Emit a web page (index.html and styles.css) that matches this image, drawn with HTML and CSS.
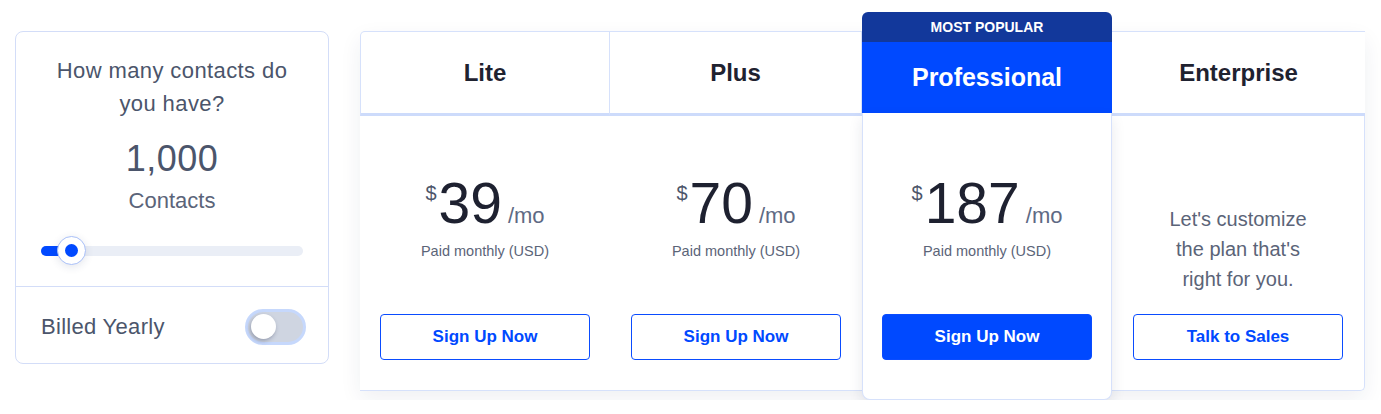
FILE: index.html
```html
<!DOCTYPE html>
<html lang="en">
<head>
    <meta charset="UTF-8">
    <meta name="viewport" content="width=device-width, initial-scale=1.0">
    <title>Pricing</title>
    <link rel="stylesheet" href="styles.css">
</head>
<body>

    <div class="page">
        <aside class="calc">
            <div class="calc-top">
                <h3 class="calc-title">How many contacts do<br>you have?</h3>
                <div class="calc-count">1,000</div>
                <div class="calc-unit">Contacts</div>
                <div class="slider">
                    <div class="slider-fill"></div>
                    <span class="slider-thumb"></span>
                </div>
            </div>
            <div class="calc-bottom">
                <span>Billed Yearly</span>
                <span class="toggle"><span class="toggle-knob"></span></span>
            </div>
        </aside>

        <section class="plans">
            <div class="plan plan-lite">
                <div class="plan-head"><h2>Lite</h2></div>
                <div class="plan-body">
                    <div class="price"><span class="cur">$</span><span class="amount">39</span><span class="per">/mo</span></div>
                    <p class="billing">Paid monthly (USD)</p>
                    <a href="#" class="btn">Sign Up Now</a>
                </div>
            </div>

            <div class="plan">
                <div class="plan-head"><h2>Plus</h2></div>
                <div class="plan-body">
                    <div class="price"><span class="cur">$</span><span class="amount">70</span><span class="per">/mo</span></div>
                    <p class="billing">Paid monthly (USD)</p>
                    <a href="#" class="btn">Sign Up Now</a>
                </div>
            </div>

            <div class="plan featured">
                <div class="badge">MOST POPULAR</div>
                <div class="plan-head"><h2>Professional</h2></div>
                <div class="plan-body">
                    <div class="price"><span class="cur">$</span><span class="amount">187</span><span class="per">/mo</span></div>
                    <p class="billing">Paid monthly (USD)</p>
                    <a href="#" class="btn btn-solid">Sign Up Now</a>
                </div>
            </div>

            <div class="plan plan-ent">
                <div class="plan-head"><h2>Enterprise</h2></div>
                <div class="plan-body">
                    <p class="note">Let's customize<br>the plan that's<br>right for you.</p>
                    <a href="#" class="btn">Talk to Sales</a>
                </div>
            </div>
        </section>
    </div>

</body>
</html>
```

FILE: styles.css
```css
* {
    box-sizing: border-box;
}
body {
    margin: 0;
    font-family: "Liberation Sans", Arial, sans-serif;
    background-color: #ffffff;
    color: #1f2230;
}
.page {
    display: flex;
    align-items: flex-start;
    gap: 31px;
    padding: 31px 0 0 15px;
}

/* contacts calculator */
.calc {
    width: 314px;
    height: 333px;
    border: 1px solid #d3ddf8;
    border-radius: 8px;
    display: flex;
    flex-direction: column;
}
.calc-top {
    padding: 22px 25px 30px;
    text-align: center;
    border-bottom: 1px solid #d3ddf8;
}
.calc-title {
    margin: 0;
    font-size: 22px;
    font-weight: normal;
    line-height: 33px;
    letter-spacing: 0.4px;
    color: #4b556b;
}
.calc-count {
    margin-top: 17px;
    font-size: 36px;
    line-height: 44px;
    letter-spacing: 0.5px;
    color: #4b556b;
}
.calc-unit {
    margin-top: 6px;
    font-size: 22px;
    line-height: 28px;
    color: #5b6479;
}
.slider {
    position: relative;
    margin-top: 31px;
    height: 10px;
    border-radius: 5px;
    background: #eaeef6;
}
.slider-fill {
    width: 30px;
    height: 10px;
    border-radius: 5px;
    background: #0049ff;
}
.slider-thumb {
    position: absolute;
    left: 16px;
    top: -10px;
    width: 29px;
    height: 29px;
    border-radius: 50%;
    background: #fff;
    border: 1px solid #a9c0f8;
    box-shadow: 0 2px 8px rgba(30, 50, 100, 0.12);
}
.slider-thumb::after {
    content: "";
    position: absolute;
    left: 7px;
    top: 7px;
    width: 13px;
    height: 13px;
    border-radius: 50%;
    background: #0049ff;
}
.calc-bottom {
    flex: 1;
    display: flex;
    align-items: center;
    justify-content: space-between;
    padding: 3px 22px 0 25px;
    font-size: 22px;
    letter-spacing: 0.3px;
    color: #4b556b;
}
.toggle {
    width: 61px;
    height: 36px;
    border-radius: 18px;
    background: #cfd5e1;
    border: 3px solid #c6d8fc;
    padding: 3px;
    display: flex;
    align-items: center;
}
.toggle-knob {
    width: 25px;
    height: 25px;
    border-radius: 50%;
    background: #fff;
    box-shadow: -1px 2px 4px rgba(40, 50, 80, 0.35);
}

/* plans */
.plans {
    position: relative;
    display: flex;
    align-items: flex-start;
}
.plans::before {
    content: "";
    position: absolute;
    left: 0;
    right: 0;
    top: 0;
    height: 360px;
    border-radius: 6px;
    box-shadow: 0 8px 22px rgba(30, 40, 80, 0.07);
    z-index: -1;
}
.plan {
    width: 252px;
    display: flex;
    flex-direction: column;
}
.plan-lite {
    width: 250px;
}
.plan-ent {
    width: 253px;
}
.plan-head {
    height: 85px;
    display: flex;
    align-items: center;
    justify-content: center;
    background: #fff;
    border-top: 1px solid #d6e1fb;
    border-right: 1px solid #d6e1fb;
    border-bottom: 3px solid #cddbfb;
}
.plan-lite .plan-head {
    border-left: 1px solid #d6e1fb;
    border-top-left-radius: 5px;
}
.plan-ent .plan-head {
    border-right: none;
}
.plan-head h2 {
    margin: 0;
    font-size: 24px;
    color: #1f2230;
}
.plan-body {
    height: 275px;
    padding: 59px 20px 30px;
    display: flex;
    flex-direction: column;
    align-items: center;
    background: #fff;
    border-bottom: 1px solid #d6e1fb;
}
.plan-ent .plan-body {
    border-right: 1px solid #d6e1fb;
    border-bottom-right-radius: 5px;
}
.price {
    display: flex;
    align-items: baseline;
    height: 56px;
    line-height: 56px;
}
.cur {
    align-self: flex-start;
    font-size: 20px;
    line-height: 20px;
    margin-top: 8px;
    margin-right: 2px;
    color: #4d566a;
}
.amount {
    font-size: 57px;
    color: #1e2130;
}
.per {
    margin-left: 6px;
    font-size: 22px;
    color: #5e6a84;
}
.billing {
    margin: 10px 0 0;
    font-size: 14.5px;
    line-height: 20px;
    color: #5b6478;
}
.note {
    margin: 29px 0 0;
    font-size: 20px;
    line-height: 30px;
    text-align: center;
    color: #5b6478;
}
.btn {
    margin-top: auto;
    width: 210px;
    height: 46px;
    display: flex;
    align-items: center;
    justify-content: center;
    border: 1px solid #0a4cff;
    border-radius: 4px;
    font-size: 17px;
    font-weight: bold;
    color: #0049ff;
    text-decoration: none;
}
.btn-solid {
    background: #0049ff;
    color: #fff;
}

/* featured column */
.featured {
    width: 250px;
    margin-top: -19px;
    position: relative;
    z-index: 1;
}
.badge {
    height: 30px;
    border-radius: 6px 6px 0 0;
    background: #12389b;
    color: #fff;
    font-size: 14px;
    font-weight: bold;
    display: flex;
    align-items: center;
    justify-content: center;
}
.featured .plan-head {
    height: 71px;
    border: none;
    background: #0049ff;
}
.featured .plan-head h2 {
    font-size: 25px;
    color: #fff;
}
.featured .plan-body {
    height: 287px;
    padding: 62px 20px 39px;
    border: 1px solid #d6e1fb;
    border-top: none;
    border-radius: 0 0 8px 8px;
    box-shadow: 0 6px 14px rgba(30, 40, 80, 0.1);
}
```
